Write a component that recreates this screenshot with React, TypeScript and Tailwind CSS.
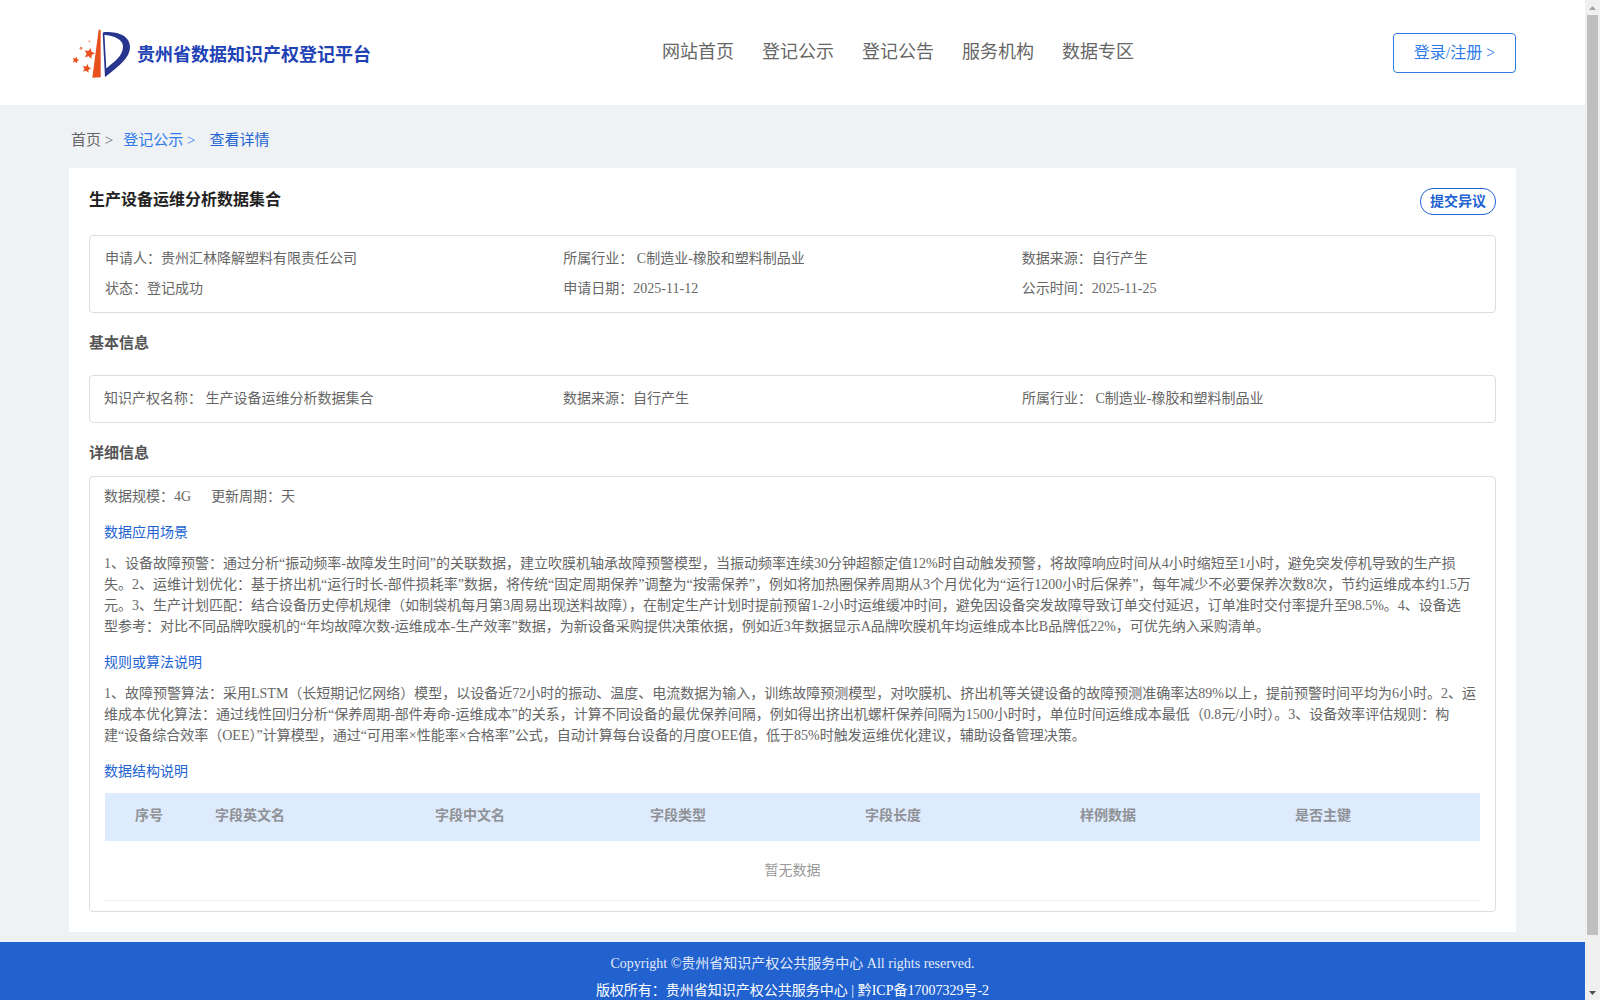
import React from "react";

const FONT = "font-['Liberation_Serif','Noto_Sans_CJK_SC',serif]";

function Star({ cx, cy, r }: { cx: number; cy: number; r: number }) {
  const pts: string[] = [];
  for (let i = 0; i < 10; i++) {
    const rad = i % 2 === 0 ? r : r * 0.48;
    const a = -Math.PI / 2 + 0.25 + (i * Math.PI) / 5;
    pts.push(`${(cx + rad * Math.cos(a)).toFixed(1)},${(cy + rad * Math.sin(a)).toFixed(1)}`);
  }
  return <polygon points={pts.join(" ")} fill="#e8501e" />;
}

function Logo() {
  return (
    <svg width="60" height="52" viewBox="36 19.5 180 156" className="shrink-0">
      <path d="M116 28 L122 28 L122 170 L97 172 Z" fill="#e8501e" />
      <path d="M128 37 L133 37 L140 165 L135 170 Z" fill="#27358f" />
      <path d="M130 35 C175 33 210 46 210 80 C210 112 178 135 138 167 L136 146 C165 122 189 106 189 78 C189 58 165 46 130 43 Z" fill="#27358f" />
      <Star cx={88} cy={99} r={17} />
      <Star cx={47} cy={119} r={11} />
      <Star cx={80} cy={144} r={14} />
      <circle cx="63" cy="83" r="4.5" fill="#ef8a60" />
      <circle cx="88" cy="62" r="3" fill="#ef9f80" />
    </svg>
  );
}

function Section({ children }: { children: React.ReactNode }) {
  return <h3 className="text-[15px] font-bold leading-5 text-[#555]">{children}</h3>;
}

const columns = [
  ["序号", "w-[110px] pl-[30px]"],
  ["字段英文名", "w-[220px]"],
  ["字段中文名", "w-[215px]"],
  ["字段类型", "w-[215px]"],
  ["字段长度", "w-[215px]"],
  ["样例数据", "w-[215px]"],
  ["是否主键", "flex-1"],
];

export default function App() {
  return (
    <div className={`flex h-[1000px] w-full overflow-hidden bg-[#eff2f5] ${FONT}`}>
      <div className="flex min-w-0 flex-1 flex-col">
        <header className="flex h-[105px] shrink-0 items-center bg-white pl-[72px] pr-[69px]">
          <div className="flex w-[590px] items-center gap-[5px]">
            <Logo />
            <span className="pt-[6px] text-[18px] font-bold text-[#1f43b5]">贵州省数据知识产权登记平台</span>
          </div>
          <nav className="mb-[1px] flex flex-1 gap-7 text-[18px] text-[#666]">
            <span>网站首页</span>
            <span>登记公示</span>
            <span>登记公告</span>
            <span>服务机构</span>
            <span>数据专区</span>
          </nav>
          <button className="h-10 w-[123px] rounded border border-[#2f7bea] text-base text-[#2f7bea]">
            登录/注册 &gt;
          </button>
        </header>

        <div className="flex h-[63px] shrink-0 items-center gap-[10px] pl-[71px] pt-[8px] text-[15px]">
          <span className="text-[#666]">首页 &gt;</span>
          <span className="text-[#2f7bea]">登记公示 &gt;</span>
          <span className="ml-[4px] text-[#2163d2]">查看详情</span>
        </div>

        <main className="mx-[69px] flex h-[764px] shrink-0 flex-col bg-white px-5 pb-5 pt-5">
          <div className="flex items-start justify-between">
            <h1 className="pt-[2px] text-base font-bold leading-5 text-[#222]">生产设备运维分析数据集合</h1>
            <button className="h-[27px] w-[76px] rounded-[13px] border border-[#2163d2] text-sm font-bold text-[#2163d2]">
              提交异议
            </button>
          </div>

          <div className="mt-5 grid h-[78px] grid-cols-3 content-center gap-y-2 rounded border border-[#ddd] px-[15px] pb-px text-sm leading-[22px] text-[#666]">
            <span>申请人：贵州汇林降解塑料有限责任公司</span>
            <span>所属行业： C制造业-橡胶和塑料制品业</span>
            <span>数据来源：自行产生</span>
            <span>状态：登记成功</span>
            <span>申请日期：2025-11-12</span>
            <span>公示时间：2025-11-25</span>
          </div>

          <div className="mt-5">
            <Section>基本信息</Section>
          </div>

          <div className="mt-[22px] grid h-12 grid-cols-3 items-center rounded border border-[#ddd] px-[14px] text-sm text-[#666]">
            <span>知识产权名称： 生产设备运维分析数据集合</span>
            <span>数据来源：自行产生</span>
            <span>所属行业： C制造业-橡胶和塑料制品业</span>
          </div>

          <div className="mt-5">
            <Section>详细信息</Section>
          </div>

          <div className="mt-[13px] flex min-h-0 flex-1 flex-col rounded border border-[#ddd] px-[14px] pt-[10px] text-sm text-[#666]">
            <div className="flex gap-5 leading-5">
              <span>数据规模：4G</span>
              <span>更新周期：天</span>
            </div>
            <div className="mt-4 leading-5 text-[#2163d2]">数据应用场景</div>
            <p className="mt-[10px] leading-[21px]">
              1、设备故障预警：通过分析“振动频率-故障发生时间”的关联数据，建立吹膜机轴承故障预警模型，当振动频率连续30分钟超额定值12%时自动触发预警，将故障响应时间从4小时缩短至1小时，避免突发停机导致的生产损失。2、运维计划优化：基于挤出机“运行时长-部件损耗率”数据，将传统“固定周期保养”调整为“按需保养”，例如将加热圈保养周期从3个月优化为“运行1200小时后保养”，每年减少不必要保养次数8次，节约运维成本约1.5万元。3、生产计划匹配：结合设备历史停机规律（如制袋机每月第3周易出现送料故障），在制定生产计划时提前预留1-2小时运维缓冲时间，避免因设备突发故障导致订单交付延迟，订单准时交付率提升至98.5%。4、设备选
              <br />
              型参考：对比不同品牌吹膜机的“年均故障次数-运维成本-生产效率”数据，为新设备采购提供决策依据，例如近3年数据显示A品牌吹膜机年均运维成本比B品牌低22%，可优先纳入采购清单。
            </p>
            <div className="mt-4 leading-5 text-[#2163d2]">规则或算法说明</div>
            <p className="mt-[10px] leading-[21px]">
              1、故障预警算法：采用LSTM（长短期记忆网络）模型，以设备近72小时的振动、温度、电流数据为输入，训练故障预测模型，对吹膜机、挤出机等关键设备的故障预测准确率达89%以上，提前预警时间平均为6小时。2、运维成本优化算法：通过线性回归分析“保养周期-部件寿命-运维成本”的关系，计算不同设备的最优保养间隔，例如得出挤出机螺杆保养间隔为1500小时时，单位时间运维成本最低（0.8元/小时）。3、设备效率评估规则：构建“设备综合效率（OEE）”计算模型，通过“可用率×性能率×合格率”公式，自动计算每台设备的月度OEE值，低于85%时触发运维优化建议，辅助设备管理决策。
            </p>
            <div className="mt-4 leading-5 text-[#2163d2]">数据结构说明</div>
            <div className="mx-px mt-[11px] flex h-12 shrink-0 items-center bg-[#deebfd] pb-[3px] font-bold text-[#8f9296]">
              {columns.map(([label, width]) => (
                <span key={label} className={width}>
                  {label}
                </span>
              ))}
            </div>
            <div className="mx-px flex h-[60px] shrink-0 items-center justify-center border-b border-[#ebeef5] text-[#999]">
              暂无数据
            </div>
          </div>
        </main>

        <footer className="mt-[10px] flex flex-1 flex-col items-center bg-[#2162cf] pt-[11px] text-sm leading-[21px] text-white">
          <div className="text-[#e3eafa]">Copyright ©贵州省知识产权公共服务中心 All rights reserved.</div>
          <div className="mt-[6px]">版权所有：贵州省知识产权公共服务中心 | 黔ICP备17007329号-2</div>
        </footer>
      </div>

      <div className="flex w-[15px] shrink-0 flex-col items-center bg-[#f0f0f0]">
        <div className="flex h-[15px] w-full items-center justify-center">
          <svg width="7" height="4" viewBox="0 0 7 4"><polygon points="3.5,0 7,4 0,4" fill="#a3a3a3" /></svg>
        </div>
        <div className="h-[920px] w-[11px] shrink-0 bg-[#bfbfbf]" />
        <div className="flex-1" />
        <div className="flex h-[15px] w-full items-center justify-center">
          <svg width="7" height="4" viewBox="0 0 7 4"><polygon points="0,0 7,0 3.5,4" fill="#505050" /></svg>
        </div>
      </div>
    </div>
  );
}
